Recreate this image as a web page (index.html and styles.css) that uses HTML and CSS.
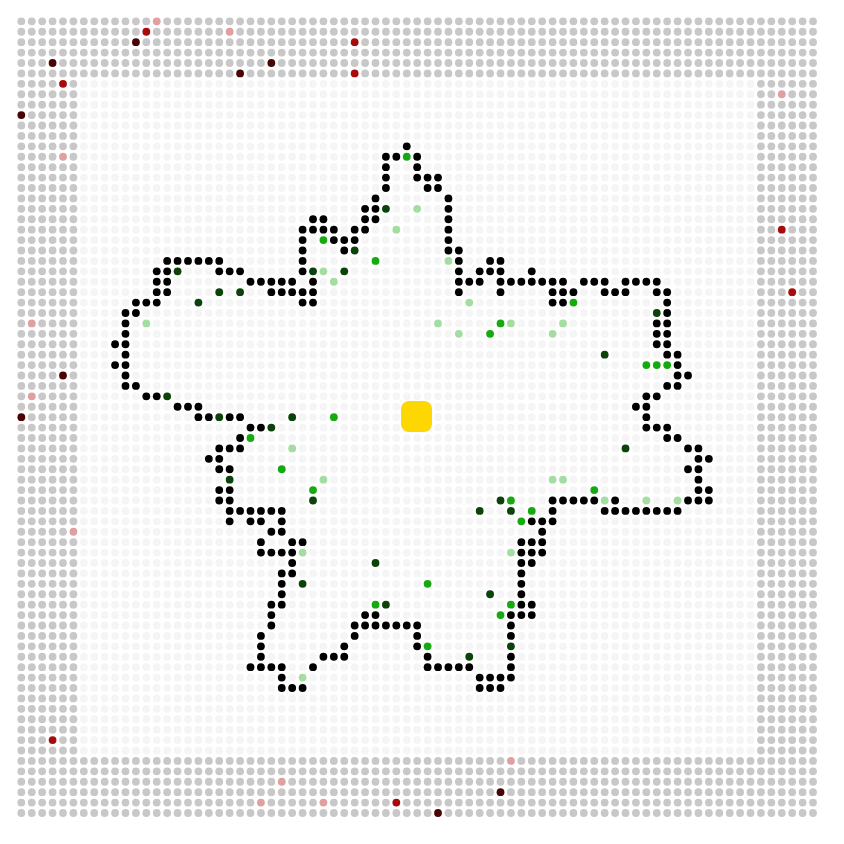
FILE: index.html
```html
<!DOCTYPE html>
<html lang="en">
<head>
<meta charset="utf-8">
<title>Dot grid</title>
<link rel="stylesheet" href="styles.css">
</head>
<body>
<svg class="board" id="board" width="844" height="844" viewBox="0 0 844 844" xmlns="http://www.w3.org/2000/svg">
  <rect class="sun" x="401" y="401" width="31" height="31" rx="8" ry="8"></rect>
</svg>
<script src="script.js"></script>
</body>
</html>
```
FILE: styles.css
```css
html, body {
  margin: 0;
  background: #ffffff;
}
body {
  width: 844px;
  height: 844px;
  overflow: hidden;
}
.board {
  display: block;
}
.dot { fill: #f5f5f5; }
.dot.edge { fill: #c8c8c8; }
.dot.K { fill: #000000; }
.dot.G { fill: #14aa10; }
.dot.D { fill: #0b4309; }
.dot.L { fill: #a3dea0; }
.dot.R { fill: #a80b0b; }
.dot.M { fill: #490505; }
.dot.P { fill: #e0a0a0; }
.sun { fill: #ffd700; }
```
FILE: script.js
```js
var SIZE = 77;
var EDGE = 6;
var ORIGIN = 21.33;
var PITCH = 10.417;
var RADIUS = 3.9;
var SVG_NS = "http://www.w3.org/2000/svg";
var marks = {
  0: "P13",
  1: "R12 P20",
  2: "M11 R32",
  4: "M3 M24",
  5: "M21 R32",
  6: "R4",
  7: "P73",
  9: "M0",
  12: "K37",
  13: "P4 K35-36 G37 K38",
  14: "K35 K38",
  15: "K35 K38-40",
  16: "K35 K39-40",
  17: "K34 K41",
  18: "K33-34 D35 L38 K41",
  19: "K28-29 K33-34 K41",
  20: "K27-30 K32-33 L36 K41 R73",
  21: "K27 G29 K30-32 K41",
  22: "K27 K31 D32 K41-42",
  23: "K14-19 K27 G34 L41 K42 K45-46",
  24: "K13-14 D15 K19-21 K27 D28 L29 D31 K42 K44-46 K49",
  25: "K13-14 K22-26 K28 L30 K42-44 K46-52 K54-56 K58-61",
  26: "K13-14 D19 D21 K24-28 K42 K46 K51-53 K56-58 K61-62 R74",
  27: "K11-13 D17 K27-28 L43 K51-52 G53 K62",
  28: "K10-11 D61 K62",
  29: "P1 K10 L12 L40 G46 L47 L52 K61-62",
  30: "K10 L42 G45 L51 K61-62",
  31: "K9-10 K61-62",
  32: "K10 D56 K62-63",
  33: "K9-10 G60-62 K63",
  34: "M4 K10 K63-64",
  35: "K10-11 K62-63",
  36: "P1 K12-13 D14 K60-61",
  37: "K15-17 K59-60",
  38: "M0 K17-18 D19 K20-21 D26 G30 K60",
  39: "K22-23 D24 K60-62",
  40: "K21 G22 K62-63",
  41: "K19-21 L26 D58 K64-65",
  42: "K18-19 K65-66",
  43: "K19-20 G25 K64-65",
  44: "D20 L29 L51 L52 K65",
  45: "K19-20 G28 G55 K65-66",
  46: "K19-20 D28 D46 G47 K51-55 L56 K57 L60 L63 K64-66",
  47: "K20-25 D44 D47 G49 K51 K56-63",
  48: "K20 K22-23 K25 G48 K49-51",
  49: "P5 K24-25 K50",
  50: "K23 K26-27 K48-50",
  51: "K23-26 L27 L47 K48-50",
  52: "K26 D34 K48-49",
  53: "K25-26 K48",
  54: "K25 D27 G39 K48",
  55: "K25 D45 K48",
  56: "K24-25 G34 D35 G47 K48-49",
  57: "K24 K33-34 G46 K47-49",
  58: "K24 K32-38 K47",
  59: "K23 K32 K38 K47",
  60: "K23 K31 K38 G39 D47",
  61: "K23 K29-31 K39 D43 K47",
  62: "K22-25 K28 K39-43 K47",
  63: "K25 L27 K44-47",
  64: "K25-27 K44-46",
  69: "R3",
  71: "P47",
  73: "P25",
  74: "M46",
  75: "P23 P29 R36",
  76: "M40"
};

function parseRow(text) {
  var result = {};
  text.split(" ").forEach(function (token) {
    var code = token.charAt(0);
    var range = token.slice(1).split("-");
    var from = Number(range[0]);
    var to = range.length > 1 ? Number(range[1]) : from;
    for (var col = from; col <= to; col++) {
      result[col] = code;
    }
  });
  return result;
}

var board = document.getElementById("board");
var sun = board.querySelector(".sun");
var fragment = document.createDocumentFragment();

for (var row = 0; row < SIZE; row++) {
  var rowMarks = marks[row] ? parseRow(marks[row]) : {};
  for (var col = 0; col < SIZE; col++) {
    var dot = document.createElementNS(SVG_NS, "circle");
    var onEdge = row < EDGE || col < EDGE || row >= SIZE - EDGE || col >= SIZE - EDGE;
    dot.setAttribute("class", "dot" + (onEdge ? " edge" : "") + (rowMarks[col] ? " " + rowMarks[col] : ""));
    dot.setAttribute("cx", (ORIGIN + col * PITCH).toFixed(2));
    dot.setAttribute("cy", (ORIGIN + row * PITCH).toFixed(2));
    dot.setAttribute("r", RADIUS);
    fragment.appendChild(dot);
  }
}
board.insertBefore(fragment, sun);
```
